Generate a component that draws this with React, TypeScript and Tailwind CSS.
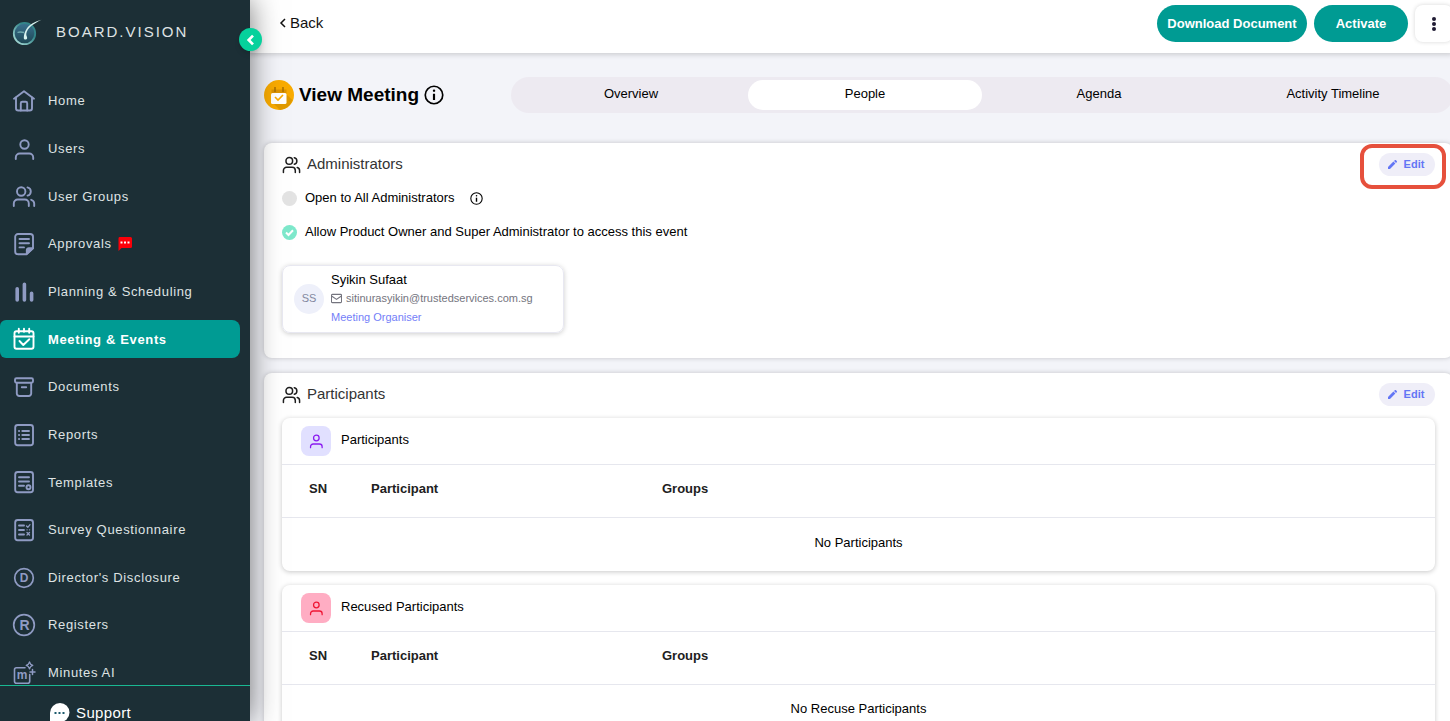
import React, { useState } from 'react';

type IconProps = { children: React.ReactNode; className?: string };

const Icon: React.FC<IconProps> = ({ children, className = 'size-6' }) => (
  <svg
    className={`shrink-0 ${className}`}
    viewBox="0 0 24 24"
    fill="none"
    stroke="currentColor"
    strokeWidth={1.9}
    strokeLinecap="round"
    strokeLinejoin="round"
    aria-hidden="true"
  >
    {children}
  </svg>
);

const userShape = (
  <>
    <circle cx="12.5" cy="7.5" r="4.2" />
    <path d="M3.8 22v-1.500a4 4 0 0 1 4-4h9.400a4 4 0 0 1 4 4V22" />
  </>
);

const usersShape = (
  <>
    <circle cx="9.200" cy="7.500" r="4.200" />
    <path d="M1.800 22v-2.500a4 4 0 0 1 4-4h7a4 4 0 0 1 4 4V22" />
    <path d="M15.500 3.400a4.200 4.200 0 0 1 0 8.200" />
    <path d="M19.200 15.800a4 4 0 0 1 3 3.800V22" />
  </>
);

const pageFrame = <rect x="3.200" y="2" width="17.800" height="20.200" rx="2.500" />;

const navItems: { label: string; icon: React.ReactNode; notify?: boolean }[] = [
  {
    label: 'Home',
    icon: (
      <>
        <path d="M2 9.800 12 2.200l10 7.600" />
        <path d="M4 8.500v10.700A2.300 2.300 0 0 0 6.300 21.500h11.400a2.300 2.300 0 0 0 2.300-2.300V8.500" />
        <path d="M8.800 21.500v-7.200a1.500 1.500 0 0 1 1.500-1.500h3.400a1.500 1.500 0 0 1 1.500 1.500v7.200" />
      </>
    ),
  },
  { label: 'Users', icon: userShape },
  { label: 'User Groups', icon: usersShape },
  {
    label: 'Approvals',
    notify: true,
    icon: (
      <>
        <path d="M14.500 22.200H6a2.800 2.800 0 0 1-2.800-2.800V4.800A2.800 2.800 0 0 1 6 2h12.200A2.800 2.800 0 0 1 21 4.800v11.400z" />
        <path d="M14.800 21.800v-3.600a2 2 0 0 1 2-2h4z" fill="currentColor" />
        <path d="M7.500 7h9.500M7.500 11.200h9.500M7.500 15.400h4.500" />
      </>
    ),
  },
  {
    label: 'Planning & Scheduling',
    icon: <path d="M5.200 8.800V20M12.400 4.300V20M19.600 13.300V20" strokeWidth={3.6} />,
  },
  {
    label: 'Meeting & Events',
    icon: (
      <>
        <rect x="2.500" y="4.200" width="19" height="17.600" rx="2" />
        <path d="M2.500 9.500h19M6.800 1.800v4M12 1.800v3M17.200 1.800v4M7.500 14l3.800 4 6-5.800" />
      </>
    ),
  },
  {
    label: 'Documents',
    icon: (
      <>
        <rect x="3" y="3.200" width="18" height="4.600" rx="1.500" />
        <path d="M4.800 7.800V18.500a2.500 2.500 0 0 0 2.500 2.500h9.400a2.500 2.500 0 0 0 2.500-2.500V7.800M9.800 12.300h4.400" />
      </>
    ),
  },
  {
    label: 'Reports',
    icon: (
      <>
        {pageFrame}
        <path d="M10.300 8h6.700M10.300 12h6.700M10.300 16h6.700" />
        <path d="M7 8h.1M7 12h.1M7 16h.1" strokeWidth={2} />
      </>
    ),
  },
  {
    label: 'Templates',
    icon: (
      <>
        {pageFrame}
        <path d="M7 7.200h10M7 11.500h10M7 15.800h5" />
        <circle cx="16.500" cy="17.200" r="2" />
      </>
    ),
  },
  {
    label: 'Survey Questionnaire',
    icon: (
      <>
        {pageFrame}
        <path d="M7 7.500h5M7 12h5M7 16.500h5" />
        <path d="m14.500 8 1.300 1.300 2.200-2.600M15 11.800h.1M17.500 11.800h.1M15 14.500l2.500 2.500M17.500 14.500 15 17" strokeWidth={1.3} />
      </>
    ),
  },
  {
    label: "Director's Disclosure",
    icon: (
      <>
        <circle cx="12" cy="12" r="9.300" strokeWidth={1.7} />
        <text x="12" y="16.200" textAnchor="middle" fontSize="12" fontWeight="bold" fill="currentColor" stroke="none" letterSpacing="0">
          D
        </text>
      </>
    ),
  },
  {
    label: 'Registers',
    icon: (
      <>
        <circle cx="12" cy="12" r="10.300" strokeWidth={1.7} />
        <text x="12.500" y="17" textAnchor="middle" fontSize="14" fontWeight="bold" fill="currentColor" stroke="none" letterSpacing="0">
          R
        </text>
      </>
    ),
  },
  {
    label: 'Minutes AI',
    icon: (
      <>
        <path d="M13 6.800H4.500a2 2 0 0 0-2 2v11.400a2 2 0 0 0 2 2h11.200a2 2 0 0 0 2-2V13.500" strokeWidth={1.6} />
        <text x="10" y="18" textAnchor="middle" fontSize="12" fontWeight="bold" fill="currentColor" stroke="none" letterSpacing="0">
          m
        </text>
        <path d="M17.500.8c.5 2.200 1.200 2.900 3.300 3.500-2.100.600-2.800 1.300-3.300 3.500-.5-2.200-1.200-2.900-3.300-3.500 2.100-.600 2.800-1.300 3.300-3.500z" strokeWidth={1.3} />
        <path d="M20.500 8.500v5M18 11h5" strokeWidth={1.5} />
      </>
    ),
  },
];

const Logo: React.FC = () => (
  <svg className="h-7 w-8 shrink-0" viewBox="0 0 32 28" aria-hidden="true">
    <defs>
      <linearGradient id="orb" x1="0" y1="0" x2="0" y2="1">
        <stop offset="0" stopColor="#3b7391" />
        <stop offset="1" stopColor="#1d4653" />
      </linearGradient>
      <linearGradient id="rim" x1="1" y1="0" x2="0" y2="1">
        <stop offset="0.35" stopColor="#33868a" />
        <stop offset="1" stopColor="#b6e6e0" />
      </linearGradient>
    </defs>
    <circle cx="12.500" cy="15.500" r="10.700" fill="url(#orb)" stroke="url(#rim)" strokeWidth="1.800" />
    <path d="M29.500 1.800C21 6 15.500 10 14.300 15.500c-.5 2.500 1.300 3 .8 5-.5 1.500-3.300 1.500-3.300-.5 0-3 .8-6 2.700-9C17.500 6.500 23 3.500 29.500 1.800z" fill="#d9f3f0" />
    <path d="M5.500 14.500c2.500-1 4.500-.5 6.500 0" fill="none" stroke="#6fa9ad" strokeWidth="1.300" />
  </svg>
);

const InfoIcon: React.FC<{ className: string }> = ({ className }) => (
  <Icon className={className}>
    <circle cx="12" cy="12" r="10.500" strokeWidth={2} />
    <path d="M12 10.500V18" strokeWidth={2.6} strokeLinecap="butt" />
    <path d="M12 6.800h.1" strokeWidth={2.8} />
  </Icon>
);

const Sidebar: React.FC = () => (
  <aside className="relative z-20 flex h-full w-[250px] shrink-0 flex-col bg-[#1c2f36] text-[#dfe3e4] shadow-[0_0_28px_rgba(0,0,0,0.55)]">
    <div className="flex h-[82px] shrink-0 items-start gap-3 pt-[18px] pl-3">
      <Logo />
      <span className="text-[15px] leading-7 tracking-[2px]">BOARD.VISION</span>
    </div>

    <nav className="-mb-[7px] flex min-h-0 flex-1 flex-col justify-between">
      {navItems.map(({ label, icon, notify }) => {
        const active = label === 'Meeting & Events';
        return (
          <a
            key={label}
            href="#"
            className={`mr-[10px] flex h-[38px] shrink-0 items-center gap-3 rounded-r-lg rounded-l-md pl-3 text-[13px] tracking-wider ${
              active ? 'bg-[#009b93] font-bold text-white' : ''
            }`}
          >
            <Icon className={active ? 'size-6' : 'size-6 text-[#8f9bc3]'}>{icon}</Icon>
            <span>{label}</span>
            {notify && (
              <svg className="-ml-[6px] h-[14px] w-[14px]" viewBox="0 0 14 14" aria-hidden="true">
                <path d="M1.500 0h11A1.500 1.500 0 0 1 14 1.500v8a1.500 1.500 0 0 1-1.500 1.500H3.500L0.500 14V1.500A1.500 1.500 0 0 1 1.500 0z" fill="#fb0009" />
                <path d="M2.500 4.500h2v2h-2zM6 4.500h2v2H6zM9.500 4.500h2v2h-2z" fill="#fff" />
              </svg>
            )}
          </a>
        );
      })}
    </nav>

    <div className="relative h-9 shrink-0 overflow-hidden border-t border-[#19b892] bg-[#1c2f36]">
      <a href="#" className="flex items-center gap-[6px] pt-[17px] pl-[50px] text-[15px] leading-[20px] tracking-wide text-white">
        <svg className="size-5 shrink-0" viewBox="0 0 20 20" aria-hidden="true">
          <path d="M10 0a9.500 9.500 0 0 1 0 19H0v-9A10 10 0 0 1 10 0z" fill="#fff" />
          <path d="M4.500 9h2v2h-2zM8.500 9h2v2h-2zM12.500 9h2v2h-2z" fill="#1c5a6c" />
        </svg>
        Support
      </a>
    </div>

    <button
      aria-label="Collapse menu"
      className="absolute top-7 -right-3 flex size-[23px] items-center justify-center rounded-full bg-[#06d19c] text-white shadow-md"
    >
      <Icon className="size-4">
        <path d="M15 5.500 8.500 12l6.500 6.500" strokeWidth={4} strokeLinecap="butt" strokeLinejoin="miter" />
      </Icon>
    </button>
  </aside>
);

const EditButton: React.FC<{ highlighted?: boolean }> = ({ highlighted }) => (
  <div className="relative">
    <button className="flex h-[23px] w-14 items-center justify-center gap-[7px] rounded-full bg-[#efeef8] pr-[2px] text-[11px] font-bold text-[#6376f5]">
      <svg className="size-[9px]" viewBox="0 0 10 10" fill="currentColor" aria-hidden="true">
        <path d="M0 10V7.800L6 1.800 8.200 4 2.200 10zM6.700 1.100 7.500.3a1 1 0 0 1 1.400 0l.8.8a1 1 0 0 1 0 1.400l-.8.8z" />
      </svg>
      Edit
    </button>
    {highlighted && (
      <span className="pointer-events-none absolute -top-[9px] -right-[11px] h-[45px] w-[86px] rounded-xl border-4 border-[#e6503c]" />
    )}
  </div>
);

const SectionHeading: React.FC<{ title: string; highlighted?: boolean }> = ({ title, highlighted }) => (
  <div className="flex h-6 items-center justify-between">
    <h2 className="flex items-center gap-[6px] text-[15px] text-[#333]">
      <Icon className="size-[19px] text-[#1f1f1f]">{usersShape}</Icon>
      {title}
    </h2>
    <EditButton highlighted={highlighted} />
  </div>
);

const CheckRow: React.FC<{ id: string; label: string; checked: boolean; children?: React.ReactNode }> = ({
  id,
  label,
  checked,
  children,
}) => (
  <div className="flex h-[34px] items-center">
    <span className="relative flex size-[15px]">
      <input
        id={id}
        type="checkbox"
        defaultChecked={checked}
        className="peer size-[15px] appearance-none rounded-full bg-[#e3e3e3] checked:bg-[#7ee8cb]"
      />
      <svg
        className="pointer-events-none absolute inset-0 hidden size-[15px] peer-checked:block"
        viewBox="0 0 15 15"
        fill="none"
        stroke="#fff"
        strokeWidth="2"
        aria-hidden="true"
      >
        <path d="m4 7.500 2.500 2.500L11 5.300" />
      </svg>
    </span>
    <label htmlFor={id} className="pl-2 text-[13px]">
      {label}
    </label>
    {children}
  </div>
);

const PeopleTable: React.FC<{ title: string; empty: string; badge: string }> = ({ title, empty, badge }) => (
  <div className="rounded-lg bg-white shadow-[0_1px_5px_rgba(0,0,0,0.22)]">
    <div className="flex h-[46px] items-center gap-[10px] pl-[19px]">
      <span className={`flex size-[30px] items-center justify-center rounded-lg ${badge}`}>
        <Icon className="size-4">{userShape}</Icon>
      </span>
      <h3 className="pb-[2px] text-[13px]">{title}</h3>
    </div>
    <table className="w-full table-fixed text-[13px]">
      <thead>
        <tr className="h-[53px] border-y border-[#e6e7ee] text-left text-[#212121]">
          <th className="w-[80px] pb-1 pl-[27px]">SN</th>
          <th className="w-[290px] pb-1 pl-[9px]">Participant</th>
          <th className="pb-1 pl-[10px]">Groups</th>
        </tr>
      </thead>
      <tbody>
        <tr className="h-[53px]">
          <td colSpan={3} className="pb-1 text-center">
            {empty}
          </td>
        </tr>
      </tbody>
    </table>
  </div>
);

const tabs = ['Overview', 'People', 'Agenda', 'Activity Timeline'];

const App: React.FC = () => {
  const [activeTab, setActiveTab] = useState('People');

  return (
    <div className="flex h-screen overflow-hidden bg-[#f3f4f9] font-['Liberation_Sans',Arial,sans-serif] text-black">
      <Sidebar />

      <div className="-mr-[3px] flex min-w-0 flex-1 flex-col">
        <header className="z-10 flex h-[53px] shrink-0 items-start justify-between bg-white pt-[5px] pl-[29px] shadow-[0_1px_6px_rgba(0,0,0,0.2)]">
          <a href="#" className="flex h-9 items-center gap-[3px] text-[15px] text-[#111]">
            <svg className="h-[10px] w-2" viewBox="0 0 8 10" fill="none" stroke="currentColor" strokeWidth="1.500" aria-hidden="true">
              <path d="M6 1 2 5l4 4" />
            </svg>
            Back
          </a>
          <div className="flex gap-[7px]">
            <button className="h-[37px] w-[150px] rounded-full bg-[#009b93] text-[13px] font-bold text-white">
              Download Document
            </button>
            <button className="h-[37px] w-[94px] rounded-full bg-[#009b93] text-[13px] font-bold text-white">
              Activate
            </button>
            <button
              aria-label="More actions"
              className="flex h-[37px] w-[38px] items-center justify-center rounded-lg bg-white text-[#1f1b33] shadow-[0_0_4px_rgba(0,0,0,0.16)]"
            >
              <svg className="h-4 w-1" viewBox="0 0 4 16" fill="currentColor" aria-hidden="true">
                <circle cx="2" cy="3" r="2" />
                <circle cx="2" cy="8" r="2" />
                <circle cx="2" cy="13" r="2" />
              </svg>
            </button>
          </div>
        </header>

        <main className="flex flex-col pl-[14px]">
          <div className="flex items-center pt-6 pb-[30px]">
            <div className="flex w-[247px] shrink-0 items-center">
              <svg className="size-[30px] shrink-0" viewBox="0 0 30 30" aria-hidden="true">
                <circle cx="15" cy="15" r="15" fill="#f9ab00" />
                <path d="m22 14 6.500 6A15 15 0 0 1 16 30l-7-7z" fill="#e09a00" />
                <path d="M7.500 9.500h15v4h-15z" fill="#dc9300" />
                <path d="M11 7v5M19 7v5" stroke="#a87000" strokeWidth="1.500" />
                <rect x="7" y="13" width="15.500" height="11" rx="1.500" fill="#fff" />
                <path d="m11 17 3 3 5-5" fill="none" stroke="#f9ab00" strokeWidth="1.600" />
              </svg>
              <h1 className="pl-[5px] text-[19px] font-bold">View Meeting</h1>
              <InfoIcon className="ml-[5px] size-5" />
            </div>
            <div role="tablist" className="flex h-9 flex-1 items-center rounded-full bg-[#edeaf1] px-[3px]">
              {tabs.map((tab) => (
                <button
                  key={tab}
                  role="tab"
                  aria-selected={activeTab === tab}
                  onClick={() => setActiveTab(tab)}
                  className={`h-[30px] flex-1 rounded-full pb-[2px] text-[13px] ${activeTab === tab ? 'bg-white' : ''}`}
                >
                  {tab}
                </button>
              ))}
            </div>
          </div>

          <section className="mb-[15px] rounded-lg bg-white px-[18px] pt-[9px] pb-[25px] shadow-[0_0_5px_rgba(0,0,0,0.2)]">
            <SectionHeading title="Administrators" highlighted />
            <div className="pt-[5px]">
              <CheckRow id="open-all" label="Open to All Administrators" checked={false}>
                <InfoIcon className="ml-[15px] size-[13px]" />
              </CheckRow>
              <CheckRow id="allow-owner" label="Allow Product Owner and Super Administrator to access this event" checked />
            </div>
            <div className="mt-4 flex w-[282px] items-center gap-[7px] rounded-lg border border-[#e8e8f1] px-[11px] pt-1 pb-[5px] shadow-[0_1px_5px_rgba(0,0,0,0.2)]">
              <span className="flex size-[30px] shrink-0 items-center justify-center rounded-full bg-[#eef0fa] text-[11px] text-[#8388a0]">
                SS
              </span>
              <div className="leading-[19px]">
                <p className="text-[13px]">Syikin Sufaat</p>
                <p className="flex items-center gap-1 text-[11px] text-[#74747e]">
                  <Icon className="size-[11px]">
                    <rect x="1" y="3" width="22" height="18" rx="2" strokeWidth={2.4} />
                    <path d="m2 7 10 7 10-7" strokeWidth={2.4} />
                  </Icon>
                  sitinurasyikin@trustedservices.com.sg
                </p>
                <p className="text-[11px] text-[#7480f8]">Meeting Organiser</p>
              </div>
            </div>
          </section>

          <section className="flex flex-col rounded-lg bg-white px-[18px] pt-[9px] pb-5 shadow-[0_0_5px_rgba(0,0,0,0.2)]">
            <SectionHeading title="Participants" />
            <div className="flex flex-col gap-[14px] pt-3">
              <PeopleTable title="Participants" empty="No Participants" badge="bg-[#e1e0ff] text-[#8b1cf0]" />
              <PeopleTable title="Recused Participants" empty="No Recuse Participants" badge="bg-[#ffadc3] text-[#ef1736]" />
            </div>
          </section>
        </main>
      </div>
    </div>
  );
};

export default App;
